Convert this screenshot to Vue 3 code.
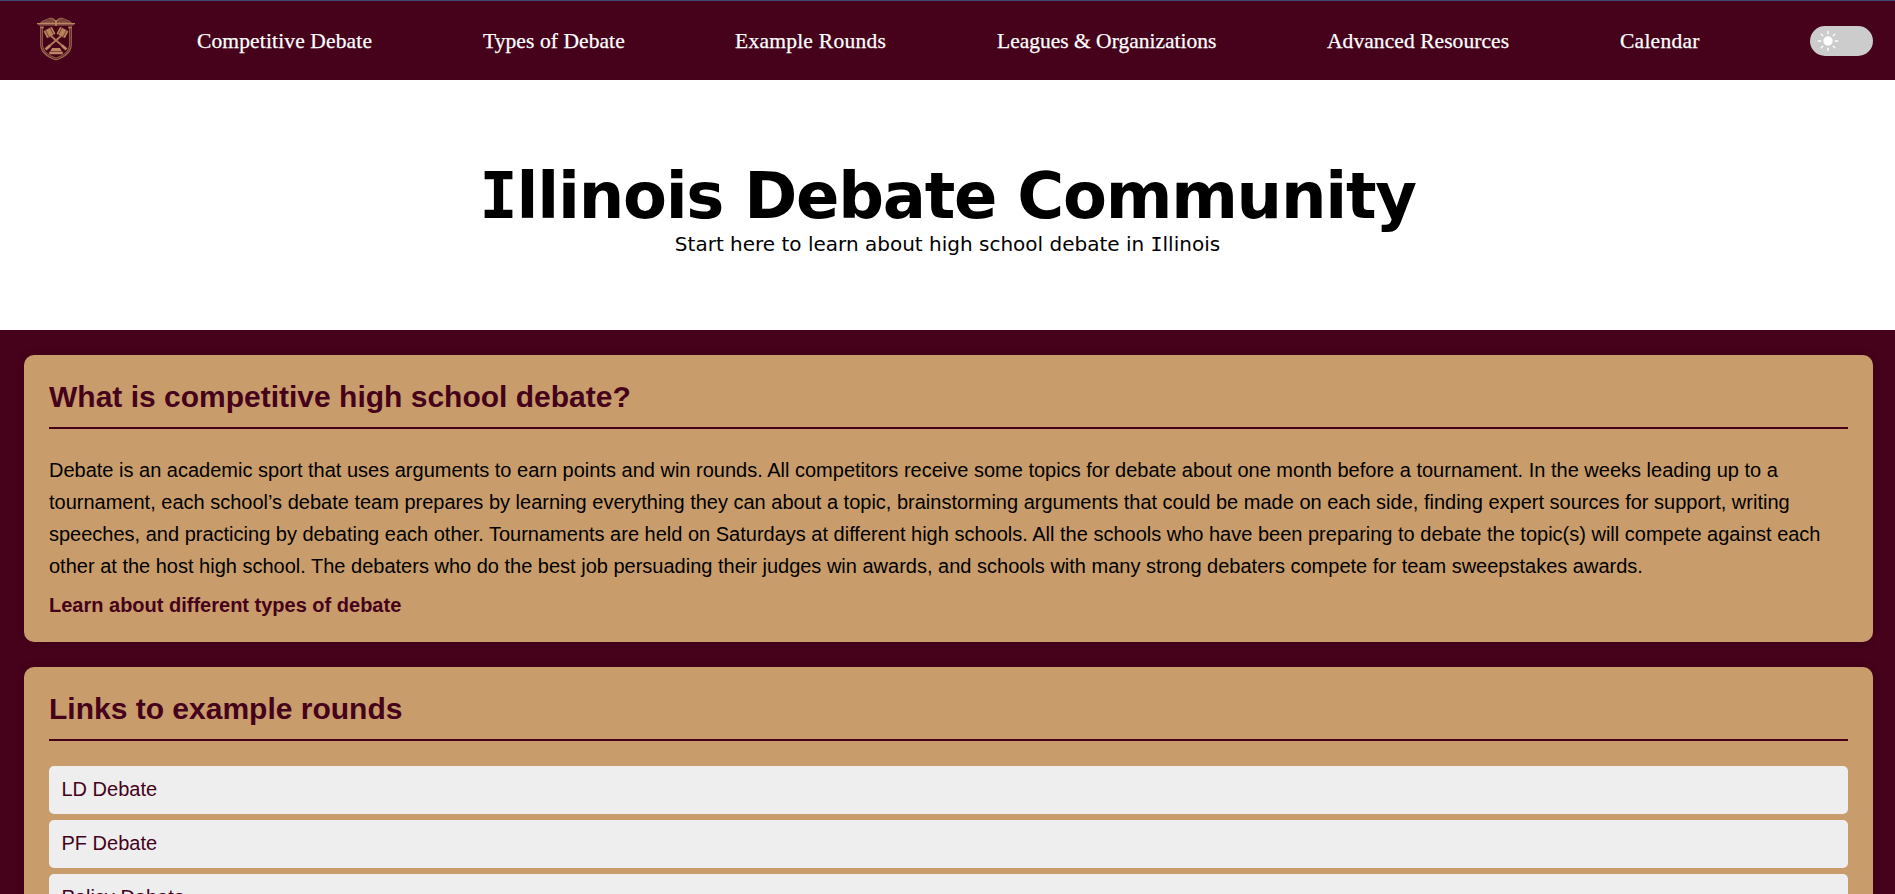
<script setup>
const links = [
  { label: 'Competitive Debate', key: 'competitive' },
  { label: 'Types of Debate', key: 'types' },
  { label: 'Example Rounds', key: 'rounds' },
  { label: 'Leagues & Organizations', key: 'leagues' },
  { label: 'Advanced Resources', key: 'advanced' },
  { label: 'Calendar', key: 'calendar' },
]
const rounds = ['LD Debate', 'PF Debate', 'Policy Debate']
const rays = [0, 45, 90, 135, 180, 225, 270, 315]
const gavels = ['', 'matrix(-1 0 0 1 38 0)']
</script>

<template>
  <div class="page">
    <nav class="nav">
      <a class="logo">
        <svg width="38" height="44" viewBox="0 0 38 44" fill="none">
          <path d="M3 6.2C5 3 9 2.500 12 1C16 .2 18.500 2 19 4.500C19.500 2 22 .2 26 1C29 2.500 33 3 35 6.200Z" fill="#935c49" />
          <path d="M6 5C9 4 12 3 15 5M10 3C13 2 16 3 18 6M32 5C29 4 26 3 23 5M28 3C25 2 22 3 20 6" stroke="#5f2830" stroke-width=".8" />
          <path d="M0 6H38L36 8.800H2Z" fill="#7d4740" />
          <path d="M0 6.700H38" stroke="#bd8560" stroke-width="1.200" />
          <path d="M19 3V9" stroke="#c89361" stroke-width="1.400" />
          <path d="M4.500 9.500V27C4.500 34.500 11 39.500 19 42C27 39.500 33.500 34.500 33.500 27V9.500" stroke="#9b644b" stroke-width="2.800" />
          <path d="M4.500 10V27C4.500 34 11 39.300 19 41.800C27 39.300 33.500 34 33.500 27V10" stroke="#58202b" stroke-width=".8" />
          <path d="M3 10.500H7M31 10.500H35" stroke="#ad7855" stroke-width="1.600" />
          <g v-for="(g, i) in gavels" :key="i" :transform="g">
            <path d="M14 19L28.500 31.500" stroke="#ad7855" stroke-width="2" />
            <path d="M25 28.500L29.500 32.500" stroke="#bd8560" stroke-width="2.800" />
            <g transform="translate(12.500 15.500) rotate(-27)">
              <rect x="-4.800" y="-4" width="9.600" height="8" rx="1" fill="#b98359" />
              <path d="M-2.500 -4.500V4.500M2.700 -4.500V4.500" stroke="#6d3537" stroke-width=".8" />
            </g>
          </g>
          <path d="M15 31H23L24.500 34H13.500ZM12.500 34.500H25.500L26 37.200H12Z" fill="#bd8560" />
        </svg>
      </a>
      <a v-for="l in links" :key="l.key" class="link" :class="l.key">{{ l.label }}</a>
      <div class="toggle">
        <svg width="22" height="22" viewBox="-11 -11 22 22">
          <circle r="4.700" fill="#fff" />
          <path v-for="r in rays" :key="r" d="M0 -7.200V-9.600" :transform="`rotate(${r})`" stroke="#fff" stroke-width="1.300" stroke-linecap="round" />
        </svg>
      </div>
    </nav>
    <header class="hero">
      <h1><span class="cap">I</span>llinois Debate Community</h1>
      <p>Start here to learn about high school debate in <span class="cap">I</span>llinois</p>
    </header>
    <main class="content">
      <section class="card first">
        <h2>What is competitive high school debate?</h2>
        <p class="body">Debate is an academic sport that uses arguments to earn points and win rounds. All competitors receive some topics for debate about one month before a tournament. In the weeks leading up to a tournament, each school’s debate team prepares by learning everything they can about a topic, brainstorming arguments that could be made on each side, finding expert sources for support, writing speeches, and practicing by debating each other. Tournaments are held on Saturdays at different high schools. All the schools who have been preparing to debate the topic(s) will compete against each other at the host high school. The debaters who do the best job persuading their judges win awards, and schools with many strong debaters compete for team sweepstakes awards.</p>
        <a class="more">Learn about different types of debate</a>
      </section>
      <section class="card second">
        <h2>Links to example rounds</h2>
        <ul>
          <li v-for="r in rounds" :key="r">{{ r }}</li>
        </ul>
      </section>
    </main>
  </div>
</template>

<style>
body { margin: 0; overflow: hidden; }
</style>

<style scoped>
* { box-sizing: border-box; }
.page {
  height: 894px;
  overflow: hidden;
  background: #45021a;
  font-family: "Liberation Sans", Arial, sans-serif;
  font-size: 20px;
}
.nav {
  display: flex;
  align-items: center;
  gap: 111px;
  height: 80px;
  padding: 1px 22px 0 25px;
  border-top: 1px solid #3b4a72;
  background: #45021a;
}
.logo {
  flex: none;
  width: 61px;
  display: flex;
  justify-content: center;
  margin-top: -5px;
}
.link {
  flex: none;
  color: #fff;
  font-family: Georgia, "Liberation Serif", serif;
  font-size: 21.5px;
  line-height: 24px;
  white-space: nowrap;
  -webkit-text-stroke: .25px #fff;
}
.competitive { width: 175px; letter-spacing: .14px; }
.types { width: 141px; letter-spacing: .08px; }
.rounds { width: 151px; letter-spacing: .25px; }
.leagues { width: 219px; }
.advanced { width: 182px; letter-spacing: .07px; }
.calendar { width: 80px; letter-spacing: .25px; }
.toggle {
  flex: none;
  display: flex;
  align-items: center;
  width: 63px;
  height: 30px;
  padding: 0 0 1px 6.5px;
  margin-left: -1px;
  border-radius: 15px;
  background: #ccc;
}
.hero {
  height: 250px;
  padding-top: 77px;
  background: #fff;
  color: #000;
  text-align: center;
  font-family: Verdana, "DejaVu Sans", sans-serif;
}
.hero h1 {
  margin: 0;
  font-size: 64px;
  line-height: 78px;
  letter-spacing: -1.25px;
  white-space: nowrap;
}
.hero p {
  margin: -3px 0 0;
  font-size: 20px;
  line-height: 24px;
}
.cap { font-family: "DejaVu Sans Mono", monospace; }
.content {
  display: flex;
  flex-direction: column;
  gap: 25px;
  padding: 25px 22px 0 24px;
}
.card {
  padding: 25px;
  border-radius: 10px;
  background: #c89c6b;
  box-shadow: 0 0 10px rgba(0, 0, 0, .1);
}
.first { height: 287px; }
.second { height: 300px; }
h2 {
  height: 49px;
  margin: 0 0 25px;
  border-bottom: 2px solid #45021a;
  color: #45021a;
  font-size: 30px;
  line-height: 34px;
}
.body {
  margin: 0 0 7px;
  line-height: 32px;
  color: #000;
}
.more {
  display: block;
  color: #45021a;
  font-weight: bold;
  line-height: 32px;
}
ul {
  display: flex;
  flex-direction: column;
  gap: 6px;
  margin: 0;
  padding: 0;
  list-style: none;
}
li {
  height: 48px;
  padding: 0 12.5px;
  border-radius: 5px;
  background: #eee;
  color: #45021a;
  line-height: 46px;
}
</style>
